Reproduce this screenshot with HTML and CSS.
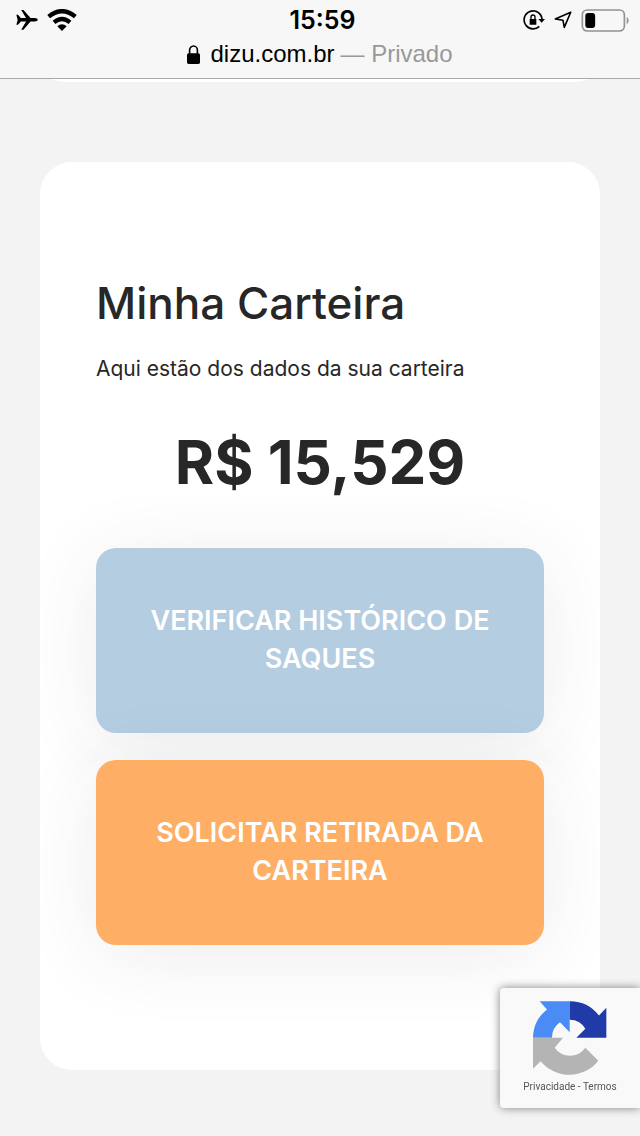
FILE: index.html
```html
<!DOCTYPE html>
<html lang="pt-BR">
<head>
  <meta charset="UTF-8">
  <meta name="viewport" content="width=device-width, initial-scale=1">
  <title>Minha Carteira</title>
  <link rel="stylesheet" href="styles.css">
</head>
<body>
  <header class="browser-bar">
    <div class="status">
      <div class="status-left">
        <svg class="icon-plane" viewBox="0 0 66 62"><path fill="#000" d="M0 15h5l9 10h16L15 0h7l22 25h13c12 0 12 11 0 11H44L22 61h-7l15-25H14L5 46H0l4-15z"/></svg>
        <svg class="icon-wifi" viewBox="0 0 90 66"><path fill="none" stroke="#000" stroke-width="13" d="M5 23Q45-10 85 23M21 40Q45 20 69 40"/><path fill="#000" d="M31 52Q45 40 59 52L45 66z"/></svg>
      </div>
      <span class="clock">15:59</span>
      <div class="status-right">
        <svg class="icon-rotation" viewBox="0 0 66 60"><path fill="none" stroke="#000" stroke-width="5" d="M53 15A27 27 0 1 0 49 49M53 15Q57 22 57 28"/><path fill="#000" d="M46 27h20L56 38zM20 27h20v17H20z"/><path fill="none" stroke="#000" stroke-width="4" d="M24 28v-7a6 6 0 0 1 12 0v7"/></svg>
        <svg class="icon-location" viewBox="0 0 56 56"><path fill="none" stroke="#000" stroke-width="5" stroke-linejoin="round" d="M52 4L4 25l24 4 4 22z"/></svg>
        <svg class="icon-battery" viewBox="0 0 144 70"><rect x="3" y="3" width="128" height="64" rx="15" fill="none" stroke="#929292" stroke-width="5"/><rect x="12" y="12" width="30" height="46" rx="9" fill="#000"/><path fill="#929292" d="M138 24q6 4 6 11t-6 11z"/></svg>
      </div>
    </div>
    <div class="address">
      <svg class="icon-lock" viewBox="0 0 40 58"><rect y="25" width="40" height="33" rx="5"/><path fill="none" stroke="#000" stroke-width="5" d="M8 28V16a12 13 0 0 1 24 0v12"/></svg>
      <span>dizu.com.br</span>
      <span class="private">— Privado</span>
    </div>
  </header>

  <main class="page">
    <div class="card card-previous"></div>

    <section class="card wallet">
      <h1>Minha Carteira</h1>
      <p>Aqui estão dos dados da sua carteira</p>
      <div class="amount">R$ 15,529</div>
      <div class="actions">
        <button type="button" class="btn btn-history">Verificar histórico de saques</button>
        <button type="button" class="btn btn-withdraw">Solicitar retirada da carteira</button>
      </div>
    </section>
  </main>

  <aside class="recaptcha">
    <svg class="recaptcha-logo" viewBox="130 94 222 224">
      <path fill="#4a8bf5" d="M240 94H150L172 119A110 110 0 0 0 130 204H187A55 55 0 0 1 211 157L240 187z"/>
      <path fill="#203ba8" d="M240 94A110 110 0 0 1 328 137L350 114V204H260L287 177A55 55 0 0 0 240 150z"/>
      <path fill="#b4b4b4" d="M130 204H220L195 234A56 56 0 0 0 287 234L326 273A111 111 0 0 1 153 274L130 297z"/>
    </svg>
    <div class="recaptcha-links"><a href="#">Privacidade</a> - <a href="#">Termos</a></div>
  </aside>
</body>
</html>
```

FILE: styles.css
```css
* {
  box-sizing: border-box;
}
body {
  margin: 0;
  background: #f3f3f3;
  color: #272727;
  font-family: Inter, 'Liberation Sans', sans-serif;
}

/* Browser bar */
.browser-bar {
  position: relative;
  z-index: 2;
  background: #f7f7f8;
  border-bottom: 1px solid #aaa;
  color: #000;
}
.status {
  display: grid;
  grid-template-columns: 1fr auto 1fr;
  align-items: center;
  height: 40px;
  padding: 0 11px 0 16px;
}
.status-left, .status-right {
  display: flex;
  align-items: center;
  gap: 9px;
}
.status-right {
  justify-content: flex-end;
}
.clock {
  font-size: 25px;
  font-weight: 600;
}
.icon-plane {
  width: 22px;
  height: 20px;
}
.icon-wifi {
  width: 30px;
  height: 22px;
}
.icon-rotation {
  width: 22px;
  height: 20px;
}
.icon-location {
  width: 18px;
  height: 18px;
}
.icon-battery {
  width: 48px;
  height: 23px;
}
.address {
  display: flex;
  justify-content: center;
  align-items: center;
  gap: 6px;
  height: 38px;
  padding-bottom: 10px;
  font-family: 'Liberation Sans', sans-serif;
  font-size: 24px;
}
.icon-lock {
  width: 13px;
  height: 19px;
  margin-right: 4px;
}
.private {
  color: #999;
}

/* Cards */
.page {
  padding: 0 40px 66px;
}
.card {
  background: #fff;
  border-radius: 32px;
}
.card-previous {
  height: 48px;
  margin-top: -45px;
}
.wallet {
  margin-top: 80px;
  padding: 112px 56px 125px;
  overflow: hidden;
}
.wallet h1 {
  margin: 0 0 22px;
  font-size: 44px;
  font-weight: 500;
  line-height: 58px;
}
.wallet p {
  margin: 0 0 34px;
  font-size: 21px;
  line-height: 30px;
}
.amount {
  margin-bottom: 42px;
  font-size: 60px;
  font-weight: 700;
  line-height: 88px;
  text-align: center;
}
.actions {
  display: flex;
  flex-direction: column;
  gap: 27px;
}
.btn {
  width: 100%;
  padding: 54px 50px 55px;
  border: none;
  border-radius: 20px;
  box-shadow: 0 10px 80px rgba(50, 50, 80, 0.09);
  color: #fff;
  font-family: inherit;
  font-size: 27px;
  font-weight: 600;
  line-height: 38px;
  text-transform: uppercase;
  cursor: pointer;
}
.btn-history {
  background: #b5cde1;
}
.btn-withdraw {
  background: #ffae66;
}

/* reCAPTCHA badge */
.recaptcha {
  position: fixed;
  right: 0;
  bottom: 28px;
  z-index: 3;
  display: flex;
  flex-direction: column;
  align-items: center;
  width: 140px;
  height: 120px;
  padding-top: 13px;
  background: #f9f9f9;
  border-radius: 4px 0 0 4px;
  box-shadow: 0 0 10px #808080;
}
.recaptcha-logo {
  width: 74px;
  height: 75px;
}
.recaptcha-links {
  margin-top: 4px;
  color: #555;
  font-family: Roboto, sans-serif;
  font-size: 10px;
  line-height: 14px;
}
.recaptcha-links a {
  color: #555;
  text-decoration: none;
}
```
